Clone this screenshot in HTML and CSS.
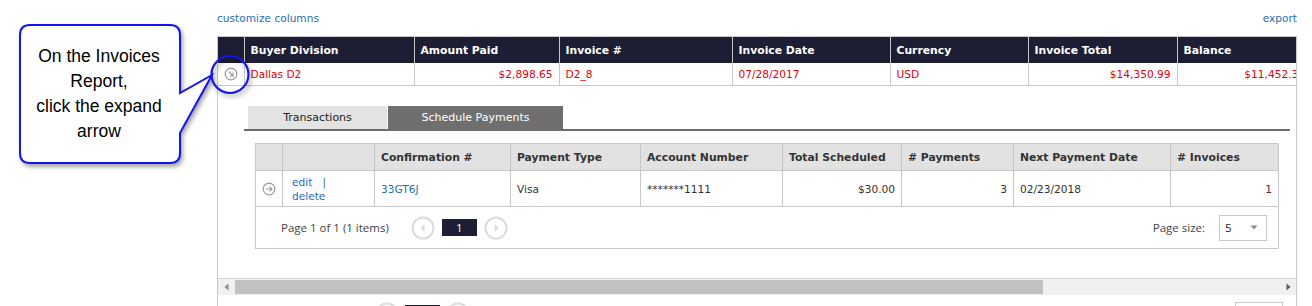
FILE: index.html
```html
<!DOCTYPE html>
<html lang="en">
<head>
    <meta charset="UTF-8">
    <title>Invoices Report</title>
    <link rel="stylesheet" href="styles.css">
</head>
<body>
    <div class="page">
        <div class="toolbar">
            <a href="#">customize columns</a>
            <a href="#">export</a>
        </div>

        <div class="grid">
            <div class="grid-scroll">
                <table class="invoices">
                    <colgroup>
                        <col style="width:26px">
                        <col style="width:170px">
                        <col style="width:145px">
                        <col style="width:173px">
                        <col style="width:158px">
                        <col style="width:138px">
                        <col style="width:149px">
                        <col style="width:134px">
                    </colgroup>
                    <thead>
                        <tr>
                            <th></th>
                            <th>Buyer Division</th>
                            <th>Amount Paid</th>
                            <th>Invoice #</th>
                            <th>Invoice Date</th>
                            <th>Currency</th>
                            <th>Invoice Total</th>
                            <th>Balance</th>
                        </tr>
                    </thead>
                    <tbody>
                        <tr class="row">
                            <td class="expand">
                                <svg width="14" height="14" viewBox="0 0 14 14"><circle cx="7" cy="7" r="5.8" fill="none" stroke="#9a9a9a" stroke-width="1.2"/><path d="M4.6 4.6L9 9M9 5.6V9H5.6" fill="none" stroke="#9a9a9a" stroke-width="1.2"/></svg>
                            </td>
                            <td>Dallas D2</td>
                            <td class="num">$2,898.65</td>
                            <td>D2_8</td>
                            <td>07/28/2017</td>
                            <td>USD</td>
                            <td class="num">$14,350.99</td>
                            <td class="num">$11,452.34</td>
                        </tr>
                        <tr class="detail-row">
                            <td colspan="8">
                                <div class="detail">
                                    <div class="tabs">
                                        <div class="tab">Transactions</div>
                                        <div class="tab active">Schedule Payments</div>
                                    </div>

                                    <table class="schedule">
                                        <colgroup>
                                            <col style="width:27px">
                                            <col style="width:92px">
                                            <col style="width:136px">
                                            <col style="width:130px">
                                            <col style="width:142px">
                                            <col style="width:119px">
                                            <col style="width:112px">
                                            <col style="width:157px">
                                            <col style="width:108px">
                                        </colgroup>
                                        <thead>
                                            <tr>
                                                <th></th>
                                                <th></th>
                                                <th>Confirmation #</th>
                                                <th>Payment Type</th>
                                                <th>Account Number</th>
                                                <th>Total Scheduled</th>
                                                <th># Payments</th>
                                                <th>Next Payment Date</th>
                                                <th># Invoices</th>
                                            </tr>
                                        </thead>
                                        <tbody>
                                            <tr class="sched-row">
                                                <td class="expand">
                                                    <svg width="14" height="14" viewBox="0 0 14 14"><circle cx="7" cy="7" r="5.8" fill="none" stroke="#9a9a9a" stroke-width="1.2"/><path d="M3.8 7H10M7.6 4.6L10 7L7.6 9.4" fill="none" stroke="#9a9a9a" stroke-width="1.2"/></svg>
                                                </td>
                                                <td class="actions"><a href="#">edit</a> &nbsp; |<br><a href="#">delete</a></td>
                                                <td><a href="#">33GT6J</a></td>
                                                <td>Visa</td>
                                                <td>*******1111</td>
                                                <td class="num">$30.00</td>
                                                <td class="num">3</td>
                                                <td>02/23/2018</td>
                                                <td class="num count">1</td>
                                            </tr>
                                            <tr class="pager-row">
                                                <td colspan="9">
                                                    <div class="pager">
                                                        <span class="pager-info">Page 1 of 1 (1 items)</span>
                                                        <span class="pager-btn">
                                                            <svg width="24" height="24" viewBox="0 0 24 24"><circle cx="12" cy="12" r="10.5" fill="none" stroke="#dcdcdc" stroke-width="2"/><path d="M13.5 8L9.5 12L13.5 16Z" fill="#dcdcdc"/></svg>
                                                        </span>
                                                        <span class="page-num">1</span>
                                                        <span class="pager-btn">
                                                            <svg width="24" height="24" viewBox="0 0 24 24"><circle cx="12" cy="12" r="10.5" fill="none" stroke="#dcdcdc" stroke-width="2"/><path d="M10.5 8L14.5 12L10.5 16Z" fill="#dcdcdc"/></svg>
                                                        </span>
                                                        <span class="page-size">Page size:</span>
                                                        <span class="combo">5
                                                            <svg width="8" height="5" viewBox="0 0 8 5"><path d="M0.5 0.5H7.5L4 4.5Z" fill="#8a8a8a"/></svg>
                                                        </span>
                                                    </div>
                                                </td>
                                            </tr>
                                        </tbody>
                                    </table>
                                </div>
                            </td>
                        </tr>
                    </tbody>
                </table>
            </div>

            <div class="hscroll">
                <span class="scroll-arrow">
                    <svg width="5" height="8" viewBox="0 0 5 8"><path d="M4.5 0.5V7.5L0.5 4Z" fill="#8a8a8a"/></svg>
                </span>
                <span class="scroll-thumb"></span>
                <span class="scroll-space"></span>
                <span class="scroll-arrow">
                    <svg width="5" height="8" viewBox="0 0 5 8"><path d="M0.5 0.5V7.5L4.5 4Z" fill="#5a5a5a"/></svg>
                </span>
            </div>

            <div class="bottom-pager">
                <span class="pager-btn">
                    <svg width="24" height="24" viewBox="0 0 24 24"><circle cx="12" cy="12" r="10.5" fill="none" stroke="#dcdcdc" stroke-width="2"/></svg>
                </span>
                <span class="page-num">1</span>
                <span class="pager-btn">
                    <svg width="24" height="24" viewBox="0 0 24 24"><circle cx="12" cy="12" r="10.5" fill="none" stroke="#dcdcdc" stroke-width="2"/></svg>
                </span>
                <span class="bottom-combo"></span>
            </div>
        </div>

        <!-- tutorial callout pointing at the expand arrow -->
        <div class="callout">
            <svg width="260" height="175" viewBox="0 0 260 175">
                <path d="M30 25H170Q180 25 180 35V93L212 75L180 133V153Q180 163 170 163H30Q20 163 20 153V35Q20 25 30 25Z" fill="#fff" stroke="#1515ee" stroke-width="2"/>
                <circle cx="230" cy="74.5" r="18.5" fill="none" stroke="#1515ee" stroke-width="2.2"/>
            </svg>
            <div class="callout-text">On the Invoices<br>Report,<br>click the expand<br>arrow</div>
        </div>
    </div>
</body>
</html>
```

FILE: styles.css
```css
body {
    margin: 0;
    font-family: "DejaVu Sans", Verdana, sans-serif;
    font-size: 10.6px;
    color: #333;
    background-color: #fff;
    overflow: hidden;
}

a {
    color: #2a6db4;
    text-decoration: none;
}

.page {
    position: relative;
    padding-left: 217px;
    width: 1080px;
}

.toolbar {
    display: flex;
    justify-content: space-between;
    align-items: center;
    height: 36px;
}

.grid {
    border: 1px solid #c8c8c8;
    border-bottom: none;
}

.grid-scroll {
    overflow: hidden;
}

.invoices {
    border-collapse: collapse;
    table-layout: fixed;
    width: 1093px;
}

.invoices th {
    height: 26px;
    padding: 0 6px;
    background-color: #1d1d33;
    color: #fff;
    font-size: 10.8px;
    font-weight: bold;
    text-align: left;
    border-left: 1px solid #c8c8c8;
    white-space: nowrap;
}

.invoices th:first-child {
    border-left: none;
}

.row td {
    height: 22px;
    padding: 0 6px;
    color: #e0000f;
    border-left: 1px solid #c8c8c8;
    border-bottom: 1px solid #c8c8c8;
    white-space: nowrap;
    overflow: hidden;
}

.row td:first-child {
    border-left: none;
}

td.num {
    text-align: right;
}

td.expand {
    padding: 0;
    text-align: center;
    line-height: 0;
}

.detail-row > td {
    padding: 20px 0 29px 26px;
}

.detail {
    width: 1046px;
}

.tabs {
    display: flex;
    gap: 1px;
    padding-left: 4px;
    border-bottom: 2px solid #6d6d6d;
}

.tab {
    width: 139px;
    height: 23px;
    line-height: 23px;
    text-align: center;
    background-color: #e3e3e3;
    color: #222;
    font-size: 11px;
}

.tab.active {
    width: 175px;
    background-color: #6f6f6f;
    color: #fff;
}

.schedule {
    margin: 12px 0 0 11px;
    border-collapse: collapse;
    table-layout: fixed;
    width: 1023px;
    border: 1px solid #c8c8c8;
    font-size: 10.6px;
}

.schedule th {
    height: 26px;
    padding: 0 6px;
    background-color: #e2e2e2;
    color: #333;
    font-size: 10.8px;
    font-weight: bold;
    text-align: left;
    border: 1px solid #c8c8c8;
    white-space: nowrap;
}

.sched-row td {
    height: 35px;
    padding: 0 6px;
    border: 1px solid #c8c8c8;
    white-space: nowrap;
}

.sched-row td.expand {
    padding: 0;
}

.sched-row td.actions {
    padding-left: 9px;
    line-height: 14px;
    color: #2a6db4;
}

.sched-row td.count {
    color: #5a2040;
}

.pager-row td {
    height: 41px;
    padding: 0;
}

.pager {
    display: flex;
    align-items: center;
    padding: 0 11px 0 25px;
    font-family: "Open Sans", "Noto Sans", sans-serif;
    font-size: 11.5px;
    color: #444;
}

.pager-info {
    margin-right: 22px;
}

.pager-btn {
    line-height: 0;
}

.page-num {
    display: inline-block;
    width: 35px;
    height: 17px;
    line-height: 17px;
    margin: 0 7px;
    text-align: center;
    background-color: #1d1d33;
    color: #fff;
}

.page-size {
    margin-left: auto;
    margin-right: 14px;
}

.combo {
    display: flex;
    align-items: center;
    justify-content: space-between;
    box-sizing: border-box;
    width: 48px;
    height: 26px;
    padding: 0 8px 0 5px;
    border: 1px solid #c8c8c8;
    color: #222;
}

.hscroll {
    display: flex;
    align-items: center;
    height: 16px;
    border-top: 1px solid #d4d4d4;
    background-color: #f0f0f0;
}

.scroll-arrow {
    display: flex;
    justify-content: center;
    width: 16px;
}

.scroll-thumb {
    width: 808px;
    height: 14px;
    margin-left: 1px;
    background-color: #c1c1c1;
}

.scroll-space {
    flex: 1;
}

.bottom-pager {
    display: flex;
    align-items: flex-start;
    height: 30px;
    padding: 7px 0 0 157px;
}

.bottom-pager .page-num {
    margin: 3px 6px 0;
}

.bottom-combo {
    width: 46px;
    height: 26px;
    margin-left: auto;
    margin-right: 13px;
    border: 1px solid #c8c8c8;
}

.callout {
    position: absolute;
    left: 0;
    top: 0;
    width: 260px;
    height: 175px;
}

.callout svg {
    filter: drop-shadow(2px 3px 2px rgba(0, 0, 0, 0.35));
}

.callout-text {
    position: absolute;
    left: 19px;
    top: 44px;
    width: 160px;
    text-align: center;
    font-family: "Liberation Sans", Arial, sans-serif;
    font-size: 17.5px;
    line-height: 25px;
    color: #000;
}
```
